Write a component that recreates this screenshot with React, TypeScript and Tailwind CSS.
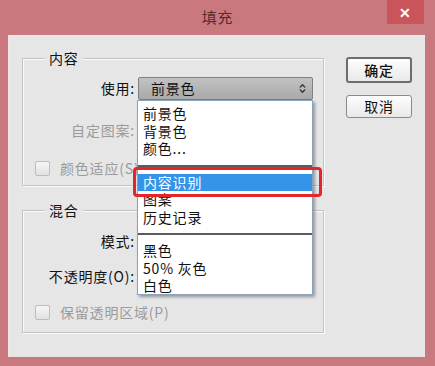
import { ChevronsUpDown } from "lucide-react";

const font = "font-['Noto_Sans_CJK_SC','Noto_Sans',sans-serif]";

const topItems = ["前景色", "背景色", "颜色..."];
const historyItems = ["图案", "历史记录"];
const colorItems = ["黑色", "50% 灰色", "白色"];

function GroupBox({ title, className, children }: { title: string; className: string; children: React.ReactNode }) {
  return (
    <div className={`relative ml-[13px] w-[302px] border border-[#c4c4c4] shadow-[inset_1px_1px_0_#fafafa,1px_1px_0_#fafafa] ${className}`}>
      <span className="absolute left-[22px] top-[-11px] bg-[#e6e6e6] px-[4px] text-[14px] leading-[20px] text-[#111]">
        {title}
      </span>
      {children}
    </div>
  );
}

function Row({ label, muted, children }: { label: string; muted?: boolean; children?: React.ReactNode }) {
  return (
    <div className="flex h-[23px] items-center">
      <span className={`w-[112px] text-right text-[14px] ${muted ? "text-[#9b9b9b]" : "text-[#111]"}`}>{label}</span>
      <div className="ml-[3px]">{children}</div>
    </div>
  );
}

function Check({ label }: { label: string }) {
  return (
    <div className="flex h-[23px] items-center pl-[12px]">
      <span className="h-[15px] w-[15px] rounded-[2px] border border-[#bdbdbd] bg-gradient-to-b from-[#f6f6f6] to-[#e2e2e2]" />
      <span className="ml-[10px] text-[14px] text-[#9b9b9b]">{label}</span>
    </div>
  );
}

function Button({ label, primary }: { label: string; primary?: boolean }) {
  return (
    <button
      className={`w-[66px] rounded-[3px] bg-gradient-to-b from-[#fdfdfd] to-[#e9e9e9] text-[14px] text-[#111] ${
        primary ? "h-[26px] border-2 border-[#6d6d6d] font-medium" : "h-[23px] border border-[#8a8a8a]"
      }`}
    >
      {label}
    </button>
  );
}

export default function App() {
  return (
    <div className={`flex h-[366px] w-[435px] flex-col bg-[#c9797e] tracking-[0.8px] ${font}`}>
      {/* title bar */}
      <div className="flex h-[35px] items-start">
        <div className="w-[48px]" />
        <div className="flex-1 pt-[6px] text-center text-[15px] text-[#5b2a2e]">填充</div>
        <div className="mr-[11px] flex h-[24px] w-[37px] items-center justify-center bg-[#c9545a] text-[14px] font-bold text-white">
          ✕
        </div>
      </div>

      {/* client area */}
      <div className="relative ml-[8px] h-[322px] w-[417px] border-t border-l border-[#f2e6e6] bg-[#e6e6e6]">
        <div className="flex">
          <div className="flex flex-col pt-[22px]">
            <GroupBox title="内容" className="h-[128px] pt-[18px]">
              <Row label="使用:">
                <div className="flex h-[23px] w-[175px] items-center justify-between rounded-[2px] border border-[#7f7f7f] bg-gradient-to-b from-[#c2c2c2] to-[#a9a9a9] pl-[12px] pr-[4px]">
                  <span className="text-[14px] text-[#111]">前景色</span>
                  <ChevronsUpDown size={11} strokeWidth={3} className="text-[#333]" />
                </div>
              </Row>
              <div className="h-[19px]" />
              <Row label="自定图案:" muted />
              <div className="h-[15px]" />
              <Check label="颜色适应(S)" />
            </GroupBox>

            <GroupBox title="混合" className="mt-[24px] h-[123px] pt-[19px]">
              <Row label="模式:" />
              <div className="h-[12px]" />
              <Row label="不透明度(O):" />
              <div className="h-[13px]" />
              <Check label="保留透明区域(P)" />
            </GroupBox>
          </div>

          <div className="ml-[22px] flex flex-col items-start gap-[12px] pt-[21px]">
            <Button label="确定" primary />
            <Button label="取消" />
          </div>
        </div>

        {/* open dropdown list */}
        <div className="absolute left-[128px] top-[64px] h-[195px] w-[176px] border border-[#8aa3bd] bg-white pt-[4px] text-[14px] leading-[17.5px] text-[#111] shadow-[2px_2px_3px_rgba(0,0,0,0.35)]">
          {topItems.map((t) => (
            <div key={t} className="pl-[5px]">{t}</div>
          ))}
          <div className="my-[7px] h-[2px] bg-[#5a5a5a]" />
          <div className="bg-[#3593e8] pl-[5px] text-white">内容识别</div>
          {historyItems.map((t) => (
            <div key={t} className="pl-[5px]">{t}</div>
          ))}
          <div className="my-[7px] h-[2px] bg-[#5a5a5a]" />
          {colorItems.map((t) => (
            <div key={t} className="pl-[5px]">{t}</div>
          ))}
        </div>

        {/* red highlight marker */}
        <div className="absolute left-[124px] top-[131px] h-[30px] w-[189px] rounded-[4px] border-[3px] border-[#e3262b]" />
      </div>
    </div>
  );
}
